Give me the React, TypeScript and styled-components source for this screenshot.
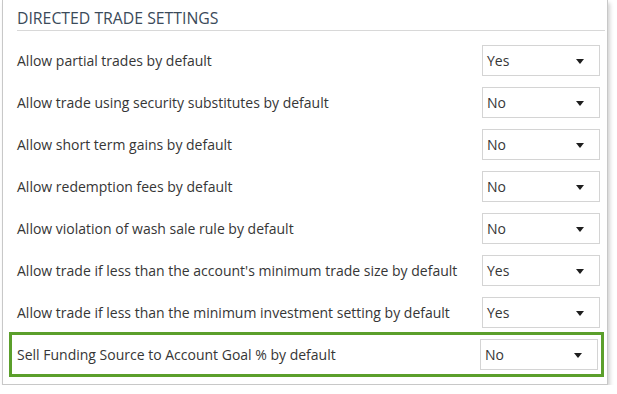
import React from 'react'
import styled, { createGlobalStyle } from 'styled-components'

const GlobalStyle = createGlobalStyle`
  html, body {
    margin: 0;
    padding: 0;
    background: #ffffff;
  }
  body {
    font-family: 'Open Sans', 'Noto Sans', sans-serif;
  }
`

const Panel = styled.div`
  box-sizing: border-box;
  width: 606px;
  margin-left: 2px;
  border: 1px solid #c8c8c8;
  border-top: none;
  background: #ffffff;
  box-shadow: 2px 3px 4px rgba(0, 0, 0, 0.18);
  padding: 0 7px 9px 14px;
`

const Title = styled.h3`
  margin: 0 -5px 0 0;
  padding-top: 8px;
  height: 22px;
  font-size: 15.8px;
  font-weight: 400;
  color: #3b4a5a;
  line-height: 20px;
  border-bottom: 1px solid #d8d8d8;
`

const Rows = styled.div`
  display: flex;
  flex-direction: column;
  padding-top: 8px;
`

const Row = styled.div<{ $highlight?: boolean }>`
  display: flex;
  align-items: center;
  justify-content: space-between;
  height: 42px;
  font-size: 14px;
  color: #363636;
  ${p =>
    p.$highlight &&
    `
    height: 45px;
    box-sizing: border-box;
    margin: -1px -4px -2px -8px;
    border: 3px solid #5b9f2b;
    padding: 0 3px 0 5px;
  `}
`

const Select = styled.div`
  display: flex;
  align-items: center;
  justify-content: space-between;
  box-sizing: border-box;
  width: 118px;
  height: 31px;
  border: 1px solid #d4d4d4;
  padding: 0 15px 0 4px;
  font-size: 14px;
  color: #363636;
  background: #ffffff;
`

const Caret = styled.span`
  width: 0;
  height: 0;
  margin-top: 2px;
  border-left: 4px solid transparent;
  border-right: 4px solid transparent;
  border-top: 5px solid #1e1e1e;
`

const settings = [
  { label: 'Allow partial trades by default', value: 'Yes' },
  { label: 'Allow trade using security substitutes by default', value: 'No' },
  { label: 'Allow short term gains by default', value: 'No' },
  { label: 'Allow redemption fees by default', value: 'No' },
  { label: 'Allow violation of wash sale rule by default', value: 'No' },
  { label: "Allow trade if less than the account's minimum trade size by default", value: 'Yes' },
  { label: 'Allow trade if less than the minimum investment setting by default', value: 'Yes' },
  { label: 'Sell Funding Source to Account Goal % by default', value: 'No', highlight: true },
]

export default function App() {
  return (
    <>
      <GlobalStyle />
      <Panel>
        <Title>DIRECTED TRADE SETTINGS</Title>
        <Rows>
          {settings.map(s => (
            <Row key={s.label} $highlight={s.highlight}>
              <span>{s.label}</span>
              <Select>
                <span>{s.value}</span>
                <Caret />
              </Select>
            </Row>
          ))}
        </Rows>
      </Panel>
    </>
  )
}
